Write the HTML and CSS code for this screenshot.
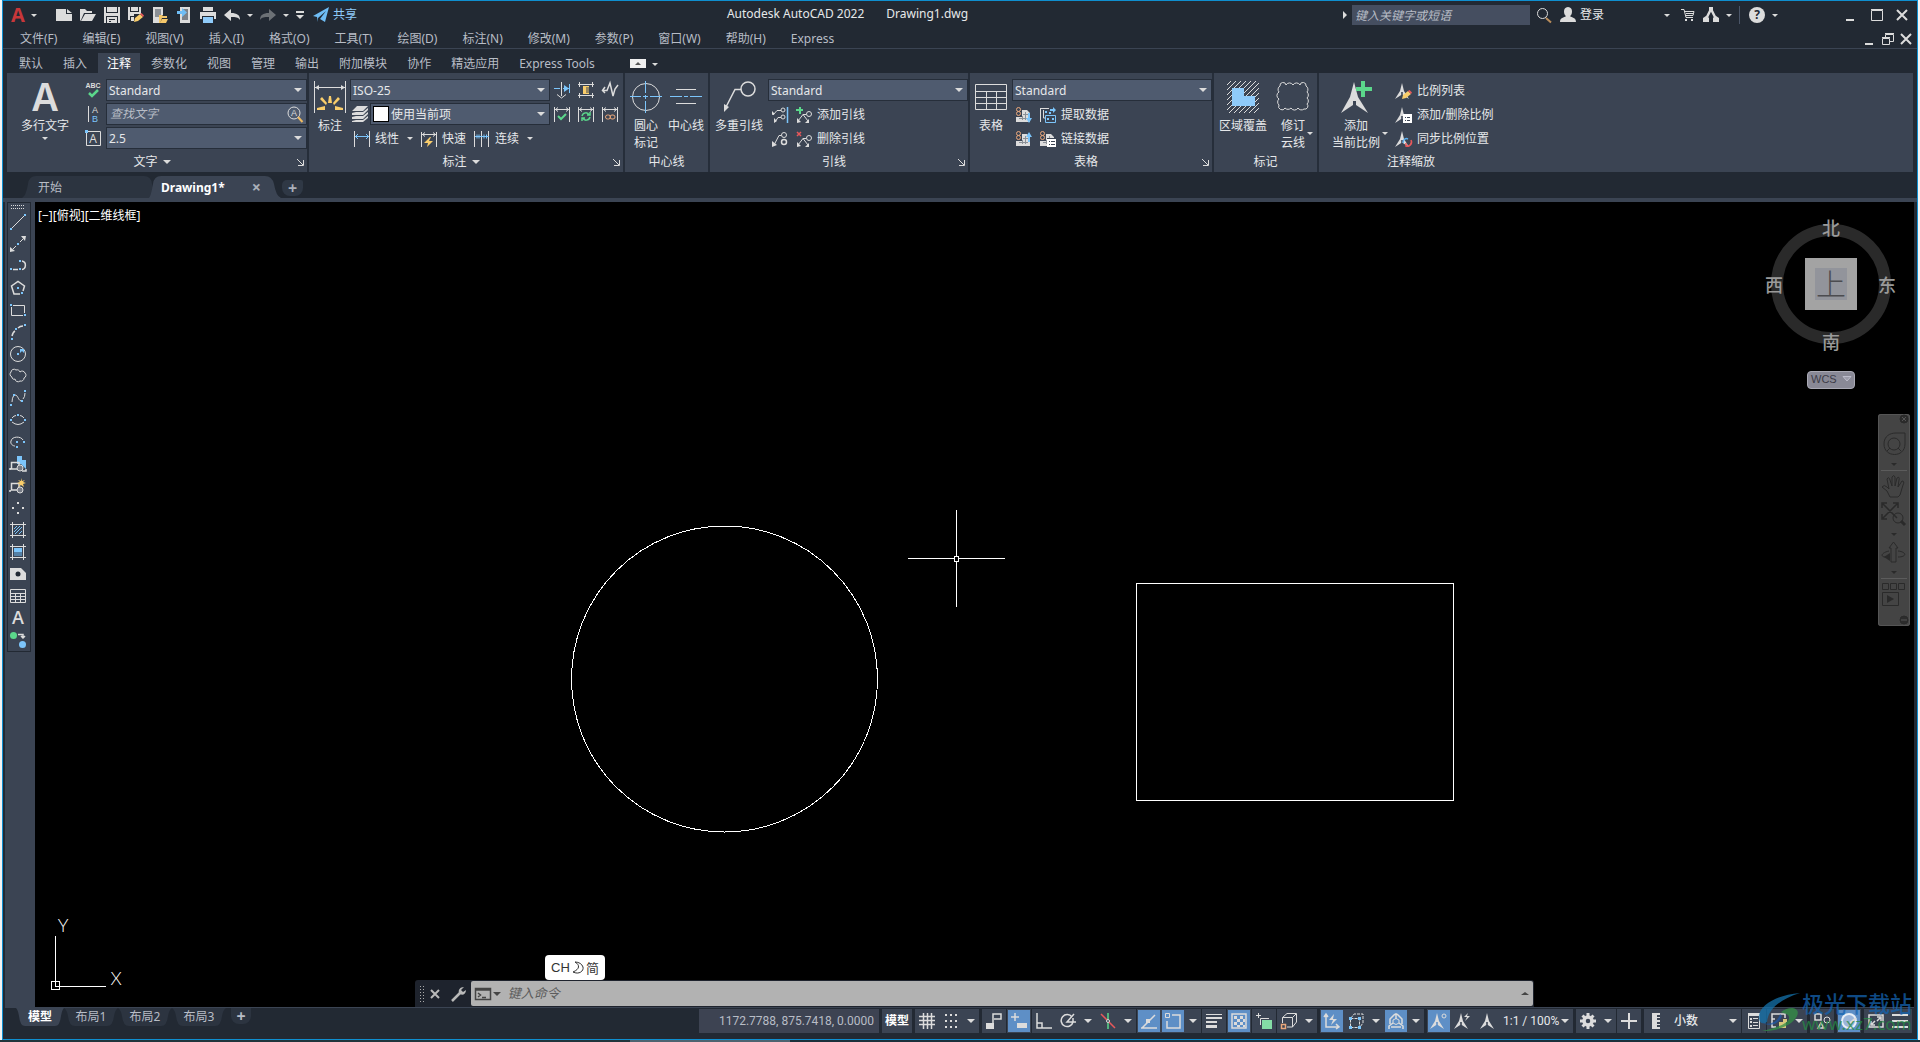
FILE: index.html
```html
<!DOCTYPE html>
<html lang="zh-CN">
<head>
<meta charset="utf-8">
<title>Autodesk AutoCAD 2022 - Drawing1.dwg</title>
<link rel="stylesheet" href="styles.css">
</head>
<body>
<svg class="defs" aria-hidden="true">
  <defs>
    <symbol id="scale" viewBox="0 0 16 16"><path class="fw" d="M8 0L10 8L15 16L8.800 12V9H7.200V12L1 16L6 8Z"/></symbol>
    <symbol id="dimbars" viewBox="0 0 16 16"><path class="w" d="M.5 1V16M15.500 1V16M1 3.500H15M4 1.500L1.500 3.500L4 5.500M12 1.500L14.500 3.500L12 5.500"/></symbol>
    <symbol id="sheet" viewBox="0 0 16 16"><path class="fw" d="M0 10H6V3H11L14 6V15H0Z"/><path d="M7 7.500H12M3 11.500H12M9.500 5V13M6.500 9V13" stroke="#8b9096"/><rect class="o" x=".5" y=".5" width="4" height="4" rx="2"/><rect class="o" x=".5" y="4.500" width="4" height="4" rx="2"/></symbol>
    <symbol id="table" viewBox="0 0 16 16"><path class="w" d="M.5 1.500H15.500V14.500H.5ZM0 5.500H16M0 8.500H16M0 11.500H16M5.500 5V15M10.500 5V15"/></symbol>
  </defs>
</svg>
<div class="window">
  <header class="titlebar">
    <div class="quick">
      <button class="logo" aria-label="应用程序菜单"><svg width="18" height="18"><text x="9" y="16" text-anchor="middle" class="logo-a">A</text></svg></button>
      <i class="car s"></i>
      <button class="q first" aria-label="新建"><svg><path class="fw" d="M0 2H10V7H16V14H0ZM11 2L16 6H11Z"/></svg></button>
      <button class="q" aria-label="打开"><svg><path class="fw" d="M0 2H5L7 4H12V6H4L1 13L0 14ZM5 7H16L12 14H1Z"/></svg></button>
      <button class="q" aria-label="保存"><svg><path class="fw" d="M0 0H2V6H14V0H16V16H14V9H2V16H0Z"/><path class="fw" d="M3 0H13V5H3ZM3 10H13V16H3Z"/><path d="M5 12.500H11M5 14.500H7" stroke="#222933"/></svg></button>
      <button class="q" aria-label="另存为"><svg><path class="fw" d="M0 0H2V5H11V0H13V7H6V9H2V13H0ZM3 0H10V4H3ZM3 10H6V14H3Z"/><path d="M6 15L7 11L12 7L15 10L10 14Z" fill="#f9cd6b"/><path d="M12 7L13.500 6L16 8.500L15 10Z" fill="#e8585b"/></svg></button>
      <button class="q" aria-label="从移动设备打开"><svg><path class="fw" d="M1 0H11V8H7V16H1Z"/><path d="M3 2H9V10H3Z" fill="#8b9096"/><path d="M7 8H10L11 9H15V11H10L8 16H7ZM10 12H16L14 16H8Z" fill="#f5c76a"/></svg></button>
      <button class="q" aria-label="保存到移动设备"><svg><path class="fw" d="M4 0H14V16H4Z"/><path d="M6 2H12V13H6Z" fill="#7b8088"/><path d="M1 4H6V1L11 5.500L6 10V7H1Z" fill="#6fbdf5"/></svg></button>
      <button class="q" aria-label="打印"><svg><path class="fw" d="M3 0H13V4H3ZM0 5H16V12H14V9H2V12H0Z"/><path d="M3 10H13V16H3Z" fill="#8fcbfa"/></svg></button>
      <button class="q" aria-label="放弃"><svg><path class="fw" d="M7 2V6C13 6 16 8 16 13C14 10 12 10 7 10V14L0 8Z"/></svg></button>
      <i class="car s"></i>
      <button class="q dim" aria-label="重做"><svg><path class="fw" d="M9 2V6C3 6 0 8 0 13C2 10 4 10 9 10V14L16 8Z"/></svg></button>
      <i class="car s"></i>
      <button class="q custom" aria-label="自定义"><svg viewBox="4 0 8 16"><path class="fw" d="M4 4H12V6H4ZM4 8H12L8 12Z"/></svg></button>
      <button class="share"><svg><path d="M0 9L16 0L12 15L7 12L13 4L5 11V15L4 10Z" fill="#6fbdf5"/></svg>共享</button>
    </div>
    <div class="caption"><span>Autodesk AutoCAD 2022</span><span>Drawing1.dwg</span></div>
    <div class="account">
      <i class="car side"></i>
      <input class="search" aria-label="搜索" placeholder="键入关键字或短语">
      <button class="q" aria-label="查找"><svg><circle class="w" cx="6.500" cy="6.500" r="5"/><path d="M10 11L15 15.500" stroke="#b98d5c" stroke-width="2"/></svg></button>
      <button class="login"><svg><path class="fw" d="M8 0C14 0 12 9 10 9C12 11 16 10 16 15H0C0 10 4 11 6 9C4 9 2 0 8 0Z"/></svg>登录</button>
      <i class="car s"></i>
      <button class="q cart" aria-label="商店"><svg><path class="w" d="M0 2.500H3L5 10.500H12M4 4.500H13L12 8.500H5M5 6.500H12"/><path class="fw" d="M4 12H6V14H4ZM10 12H12V14H10Z"/></svg></button>
      <button class="q" aria-label="Autodesk App Store"><svg><path class="w" stroke-width="2.500" d="M8 2L3 12M8 2L13 12M3 12H6M10 12H13"/><path class="fw" d="M6 0H10V4H6ZM0 11L3 9L6 11V15H0ZM10 11L13 9L16 11V15H10Z"/></svg></button>
      <i class="car s"></i>
      <span class="rule"></span>
      <button class="help" aria-label="帮助">?</button>
      <i class="car s"></i>
      <div class="winbtns">
        <button aria-label="最小化"><svg><path class="fw" d="M0 12H8V14H0Z"/></svg></button>
        <button aria-label="最大化"><svg><path class="w" d="M.5 3.500H11.500V13.500H.5ZM0 2.500H12"/></svg></button>
        <button aria-label="关闭"><svg><path class="w" stroke-width="2" d="M1 3L11 13M11 3L1 13"/></svg></button>
      </div>
    </div>
  </header>
  <nav class="menubar">
    <a href="#">文件(F)</a><a href="#">编辑(E)</a><a href="#">视图(V)</a><a href="#">插入(I)</a><a href="#">格式(O)</a><a href="#">工具(T)</a><a href="#">绘图(D)</a><a href="#">标注(N)</a><a href="#">修改(M)</a><a href="#">参数(P)</a><a href="#">窗口(W)</a><a href="#">帮助(H)</a><a href="#">Express</a>
    <div class="docbtns">
      <button aria-label="最小化图形"><svg><path class="fw" d="M1 12H9V14H1Z"/></svg></button>
      <button aria-label="还原图形"><svg><path class="w" d="M3.500 6V3.500H11.500V10.500H8M3 2.500H12M.5 7.500H7.500V13.500H.5ZM0 6.500H8"/></svg></button>
      <button aria-label="关闭图形"><svg><path class="w" stroke-width="2" d="M1 3L11 13M11 3L1 13"/></svg></button>
    </div>
  </nav>
  <nav class="tabs">
    <a href="#">默认</a><a href="#">插入</a><a href="#" class="on">注释</a><a href="#">参数化</a><a href="#">视图</a><a href="#">管理</a><a href="#">输出</a><a href="#">附加模块</a><a href="#">协作</a><a href="#">精选应用</a><a href="#">Express Tools</a>
    <button class="collapse" aria-label="最小化功能区"><i class="car up"></i></button><i class="car s"></i>
  </nav>

  <section class="ribbon">
    <div class="panel p-text">
      <div class="body">
        <button class="big"><svg viewBox="0 0 32 32"><text x="16" y="30" text-anchor="middle" class="mtext-a">A</text></svg>多行文字<i class="car s"></i></button>
        <div class="icons">
          <button aria-label="拼写检查"><svg><text x="8" y="6" text-anchor="middle" class="abc">ABC</text><path d="M4 11L7 14L13 8" class="g" stroke-width="2.500"/></svg></button>
          <button aria-label="文字对齐"><svg><path class="w" d="M3.500 0V16"/><text x="10" y="7" text-anchor="middle" class="ab">A</text><text x="10" y="16" text-anchor="middle" class="ab bl">B</text></svg></button>
          <button aria-label="文字样式"><svg><path class="w" d="M1.500 1.500H15.500V15.500H1.500Z"/><path class="fb" d="M0 0H3V3H0Z"/><text x="8" y="13" text-anchor="middle" class="boxa">A</text></svg></button>
        </div>
        <div class="col">
          <div class="combo"><select aria-label="文字样式"><option>Standard</option></select></div>
          <div class="find"><input aria-label="查找文字" placeholder="查找文字"><svg><circle class="w" cx="7" cy="7" r="6"/><text x="7" y="10" text-anchor="middle" class="ab">A</text><path d="M11 11L15.500 16" stroke="#f0bb62" stroke-width="2"/></svg></div>
          <div class="combo"><select aria-label="文字高度"><option>2.5</option></select></div>
        </div>
      </div>
      <div class="ptitle more">文字<i class="car"></i><button class="launch" aria-label="文字设置"><svg><path class="w" d="M2 2L8 8M8.500 3V8.500H3"/></svg></button></div>
    </div>

    <div class="panel p-dim">
      <div class="body">
        <button class="big"><svg viewBox="0 0 32 32"><path class="w" d="M.5 0V32M31.500 0V32M1 6.500H31"/><path class="fw" d="M1 6.500L5 4V9ZM31 6.500L27 4V9Z"/><path class="fy" d="M15 15H17L18 22H14ZM6 18L8 16L13 22L12 24ZM26 18L24 16L19 22L20 24ZM3 27L11 25V29H3ZM29 27L21 25V29H29Z"/></svg>标注</button>
        <div class="col">
          <div class="combo"><select aria-label="标注样式"><option>ISO-25</option></select></div>
          <div class="row layer"><svg><path class="fw" d="M5 0H16L11 5H0ZM0 7L4 6H11L16 2V4L11 9H0ZM0 11L4 10H11L16 6V8L11 13H0ZM0 15L4 14H11L16 10V12L11 16H0Z"/></svg><div class="combo"><span class="swatch"></span><select aria-label="标注图层"><option>使用当前项</option></select></div></div>
          <div class="row dims">
            <button><svg><path class="w" d="M.5 0V16M15.500 0V16"/><path class="b" d="M1 5.500H15M4 3L1.500 5.500L4 8M12 3L14.500 5.500L12 8"/></svg>线性</button><i class="car s"></i>
            <button><svg><use href="#dimbars"/><path class="fy" d="M9 6L3 12H7L6 16L12 10H8L10 6Z"/></svg>快速</button>
            <button><svg><path class="w" d="M.5 0V16M7.500 0V16M14.500 0V16"/><path class="b" d="M1 5.500H15M3 3.500V7.500M5 3.500V7.500M10 3.500V7.500M12.500 3.500V7.500"/></svg>连续</button><i class="car s"></i>
          </div>
        </div>
        <div class="iconGrid">
          <button aria-label="打断"><svg><path class="w" d="M7.500 0V14M3 12.500L7.500 16L12 12.500"/><path class="b" d="M0 6.500H6M9 6.500H15M15.500 2V11"/><path class="fb" d="M10 3L15 6.500L10 10Z"/></svg></button>
          <button aria-label="调整间距"><svg><path class="w" d="M0 2.500H16M0 13.500H16M1.500 0V5M14.500 0V5M1.500 11V16M14.500 11V16"/><path class="fy" d="M5 4H11V12H5Z"/><path d="M8 6H11M8 8H11M8 10H11" stroke="#3b4453"/></svg></button>
          <button aria-label="折弯标注"><svg><path class="w" d="M0 8.500H5L8 1L11 14L13 7L16 3M3 5L.5 8.500L3 11" stroke-width="1.500"/></svg></button>
          <button aria-label="检验"><svg><use href="#dimbars"/><path class="g" stroke-width="2" d="M4 10L7 13L12 8"/></svg></button>
          <button aria-label="更新"><svg><use href="#dimbars"/><path class="g" stroke-width="1.500" d="M4 10C5 6 10 6 11 9M12 6V9H9M12 11C11 15 6 15 5 12M4 15V12H7"/></svg></button>
          <button aria-label="重新关联"><svg><use href="#dimbars"/><rect class="o" x="3.500" y="9" width="5" height="4" rx="2"/><rect class="o" x="8" y="9" width="5" height="4" rx="2"/></svg></button>
        </div>
      </div>
      <div class="ptitle more">标注<i class="car"></i><button class="launch" aria-label="标注设置"><svg><path class="w" d="M2 2L8 8M8.500 3V8.500H3"/></svg></button></div>
    </div>

    <div class="panel p-center">
      <div class="body">
        <button class="big"><svg viewBox="0 0 32 32"><circle class="w" cx="16" cy="16" r="13.500"/><path class="b" d="M15.500 0V12M15.500 14V18M15.500 20V32M0 15.500H11M13 15.500H18M20 15.500H32"/></svg>圆心<br>标记</button>
        <button class="big"><svg viewBox="0 0 32 32"><path class="w" d="M6 8.500H26M6 22.500H26"/><path class="b" d="M0 15.500H12M14 15.500H18M20 15.500H32"/></svg>中心线</button>
      </div>
      <div class="ptitle">中心线</div>
    </div>

    <div class="panel p-leader">
      <div class="body">
        <button class="big"><svg viewBox="0 0 32 32"><circle class="w" cx="25" cy="8" r="7" stroke-width="1.500"/><path class="w" stroke-width="1.500" d="M18 8.500H12L3 26"/><path class="fw" d="M1 31V23L6 26Z"/></svg>多重引线</button>
        <div class="col">
          <div class="combo"><select aria-label="多重引线样式"><option>Standard</option></select></div>
          <div class="row links"><button aria-label="对齐"><svg><path class="b" stroke-width="1.500" d="M15.500 0V16"/><circle class="w" cx="11" cy="3" r="2"/><circle class="w" cx="11" cy="10" r="2"/><path class="w" d="M9 3.500H5L1 8M9 10.500H6L3 15"/><path class="fw" d="M0 8V4L3 7ZM2 16V11L5 14Z"/></svg></button><button class="txt"><svg><path d="M3 0H5V2H7V4H5V7H3V4H0V2H3Z" fill="#5bd78b"/><circle class="w" cx="13" cy="7" r="2.500"/><path class="w" d="M10 7.500H7L2 14M7 7.500L12 14"/><path class="fw" d="M1 16V11L5 15ZM13 16H9L13 12Z"/></svg>添加引线</button></div>
          <div class="row links"><button aria-label="合并"><svg><circle class="w" cx="12" cy="4" r="2.500"/><circle class="w" cx="12" cy="11" r="2.500" stroke-width="1.500"/><path class="w" d="M9 4.500H7L2 14"/><path class="fw" d="M0 16V10L5 14Z"/></svg></button><button class="txt"><svg><path d="M1 1L5 5M5 1L1 5" stroke="#e8585b" stroke-width="1.500"/><circle class="w" cx="13" cy="7" r="2.500"/><path class="w" d="M10 7.500H7L2 14M7 7.500L12 14"/><path class="fw" d="M1 16V11L5 15ZM13 16H9L13 12Z"/></svg>删除引线</button></div>
        </div>
      </div>
      <div class="ptitle more">引线<button class="launch" aria-label="引线设置"><svg><path class="w" d="M2 2L8 8M8.500 3V8.500H3"/></svg></button></div>
    </div>

    <div class="panel p-table">
      <div class="body">
        <button class="big"><svg viewBox="0 0 32 32"><path class="w" d="M.5 3.500H31.500V28.500H.5ZM1 10.500H31M1 16.500H31M1 22.500H31M11.500 11V28M21.500 11V28"/></svg>表格</button>
        <div class="col">
          <div class="combo"><select aria-label="表格样式"><option>Standard</option></select></div>
          <div class="row links"><button aria-label="从源下载"><svg><use href="#sheet"/><path class="fb" d="M12 6H14V11H16L13 16L10 11H12Z"/></svg></button><button class="txt"><svg><path class="w" d="M.5 1V15M1 1.500H9M3.500 3V11H6"/><path class="b" d="M5.500 8.500H15.500V15.500H5.500Z"/><path class="fb" d="M10 2H13V0L16 3L13 6V4H10ZM5 4H7V6H5ZM9 5H11V7H9ZM7 11H9V13H7ZM12 11H14V13H12Z"/></svg>提取数据</button></div>
          <div class="row links"><button aria-label="上载到源"><svg><use href="#sheet"/><path class="fb" d="M12 11H14V6H16L13 1L10 6H12Z"/></svg></button><button class="txt"><svg><use href="#sheet"/><path d="M7 7H16V16H7Z" fill="#fff"/><path d="M7 7.500H16M9 10.500H10M11 10.500H15M9 13.500H10M11 13.500H15" stroke="#3b4453"/></svg>链接数据</button></div>
        </div>
      </div>
      <div class="ptitle more">表格<button class="launch" aria-label="表格设置"><svg><path class="w" d="M2 2L8 8M8.500 3V8.500H3"/></svg></button></div>
    </div>

    <div class="panel p-mark">
      <div class="body">
        <button class="big"><svg viewBox="0 0 32 32"><path class="w" d="M0 4L4 0M0 9L9 0M0 14L14 0M0 19L19 0M0 24L24 0M0 29L29 0M2 32L32 2M7 32L32 7M12 32L32 12M17 32L32 17M22 32L32 22M27 32L32 27"/><path d="M5 7H17V15H28V25H5Z" fill="#8fcbfa"/></svg>区域覆盖</button>
        <button class="big"><svg viewBox="0 0 32 32"><path class="w" d="M3 5A3 3 0 0 1 9 4A4 4 0 0 1 16 4A4 4 0 0 1 23 4A3 3 0 0 1 29 5A4 4 0 0 1 30 11A4 4 0 0 1 30 17A4 4 0 0 1 30 23A3 3 0 0 1 27 28A4 4 0 0 1 21 27A4 4 0 0 1 14 27A4 4 0 0 1 8 27A3 3 0 0 1 2 24A4 4 0 0 1 2 18A4 4 0 0 1 2 11A4 4 0 0 1 3 5Z"/></svg>修订<br>云线</button><i class="car s low"></i>
      </div>
      <div class="ptitle">标记</div>
    </div>

    <div class="panel p-anno">
      <div class="body">
        <button class="big"><svg viewBox="0 0 32 32"><path class="fw" d="M14 1L18 16L28 32L16 24V20H13V24L1 32L10 16Z"/><path d="M21 0H25V6H32V10H25V16H21V10H16V6H21Z" fill="#5bd78b"/></svg>添加<br>当前比例</button><i class="car s low"></i>
        <div class="col">
          <button class="txt"><svg><use href="#scale" x="-2"/><path d="M6 16L7 12L12 8L15 11L10 15Z" fill="#f9cd6b"/><path d="M12 8L13.500 7L16 9.500L15 11Z" fill="#e8585b"/></svg>比例列表</button>
          <button class="txt"><svg><use href="#scale" x="-2"/><path d="M7 7H16V16H7Z" fill="#fff"/><path d="M9 10.500H10M11 10.500H14M9 13.500H10M11 13.500H14" stroke="#3b4453"/></svg>添加/删除比例</button>
          <button class="txt"><svg><use href="#scale" x="-2"/><path stroke="#5bb0f0" stroke-width="1.500" d="M7 12C7 8 10 7 12 8"/><path stroke="#e8585b" stroke-width="1.500" d="M15 9C17 13 13 16 10 15M10 12V15H13"/></svg>同步比例位置</button>
        </div>
      </div>
      <div class="ptitle">注释缩放</div>
    </div>
  </section>

  <nav class="doctabs">
    <a href="#" class="start">开始</a><a href="#" class="active">Drawing1*<span>×</span></a><button aria-label="新图形">+</button>
  </nav>

  <main class="work">
    <aside class="tools">
      <div class="toolbox">
        <span class="grip"></span>
        <button aria-label="直线"><svg><path class="w" d="M1 15L15 1"/><path class="fb" d="M0 14H2V16H0ZM14 0H16V2H14Z"/></svg></button>
        <button aria-label="构造线"><svg><path class="w" d="M3 13L6 10M10 6L13 3"/><path class="fw" d="M0 16V11L5 15ZM16 0H11L15 5Z"/><path class="fb" d="M7 7H9V9H7Z"/></svg></button>
        <button aria-label="多段线"><svg><path class="w" stroke-width="1.500" d="M3 11.500H8M12 3C17 4 16 11 12 11.500"/><path class="fb" d="M0 10H2V12H0ZM9 2H11V4H9ZM9 10H11V12H9Z"/></svg></button>
        <button aria-label="多边形"><svg><path class="w" stroke-width="1.500" d="M10 14H4L1.500 6L8 1.500L14.500 6L13 11"/><path class="fb" d="M7 7H9V9H7ZM11 12H13V14H11Z"/></svg></button>
        <button aria-label="矩形"><svg><path class="w" d="M3 3.500H14.500V11M13 13.500H1.500V5"/><path class="fb" d="M0 2H2V4H0ZM14 12H16V14H14Z"/></svg></button>
        <button aria-label="圆弧"><svg><path class="w" stroke-width="1.500" d="M2 12Q3 8 5 7M8 4Q10 2 13 2"/><path class="fb" d="M1 14H3V16H1ZM5 4H7V6H5ZM14 0H16V2H14Z"/></svg></button>
        <button aria-label="圆"><svg><circle class="w" cx="8" cy="8" r="7.500"/><path class="fb" d="M7 7H9V9H7ZM10 3H14V7L12 5L10 7V5Z"/></svg></button>
        <button aria-label="修订云线"><svg><path class="w" d="M2 9A3 3 0 0 1 1 4A3 3 0 0 1 6 2A3 3 0 0 1 10 4A3 3 0 0 1 15 5A3 3 0 0 1 14 10A3 3 0 0 1 10 13A3 3 0 0 1 5 11A2 2 0 0 1 2 9Z"/></svg></button>
        <button aria-label="样条曲线"><svg><path class="w" d="M2 12Q2 8 4 5M5 5C8 5 8 10 11 11M13 9Q15 7 15 3"/><path class="fb" d="M0 14H2V16H0ZM3 4H5V6H3ZM11 10H13V12H11ZM14 0H16V2H14Z"/></svg></button>
        <button aria-label="椭圆"><svg><path class="w" d="M2 6Q4 3.500 6 3.500M10 3.500Q12 3.500 14 6M2 10Q8 15 14 10"/><path class="fb" d="M0 7H2V9H0ZM7 2H9V4H7ZM14 7H16V9H14Z"/></svg></button>
        <button aria-label="椭圆弧"><svg><path class="w" d="M13 6C11 2 2 2 1 7C0 10 3 12 5 12"/><path class="fb" d="M6 7H8V9H6ZM13 7H15V9H13ZM6 12H8V14H6Z"/></svg></button>
        <button aria-label="插入块"><svg><path class="fb" d="M7 0H12V4H16V13L11 8H7Z"/><path class="w" stroke-width="1.500" d="M1.500 6.500H9V13H1.500ZM0 14V12M12 15H16V13"/><circle class="w" cx="10" cy="12" r="3" fill="#777c86"/></svg></button>
        <button aria-label="创建块"><svg><path class="w" stroke-width="1.500" d="M1.500 5.500H9V12H1.500ZM0 14V12"/><circle class="w" cx="10" cy="12" r="3" fill="#777c86"/><path class="fy" d="M11 0L12 3L15 2L13 4L16 5L13 6L14 9L11 7L8 9L10 6L7 5L10 4L8 2L11 3Z"/></svg></button>
        <button aria-label="点"><svg><path class="fw" d="M7 2H9V4H7ZM2 7H4V9H2ZM12 7H14V9H12ZM7 12H9V14H7Z"/></svg></button>
        <button aria-label="图案填充"><svg><path class="w" d="M0 2.500H16M0 13.500H16M2.500 0V16M13.500 0V16"/><path class="b" d="M4 7L7 4M4 10L10 4M5 12L12 5M9 12L12 9"/></svg></button>
        <button aria-label="渐变色"><svg><path class="w" d="M0 2.500H16M0 13.500H16M2.500 0V16M13.500 0V16"/><rect x="4" y="4" width="8" height="4" fill="#7cc5fb"/><rect x="4" y="8" width="8" height="4" fill="#5580a5"/></svg></button>
        <button aria-label="面域"><svg><path class="fw" d="M0 2H11L16 7V14H0Z"/><circle cx="8" cy="8" r="2.500" fill="#222933"/></svg></button>
        <button aria-label="表格"><svg><use href="#table"/></svg></button>
        <button aria-label="多行文字"><svg><text x="8" y="14" text-anchor="middle" class="tool-a">A</text></svg></button>
        <button aria-label="添加选定对象"><svg><circle cx="3.500" cy="3.500" r="3.500" fill="#5bd78b"/><circle cx="12.500" cy="12.500" r="3.500" fill="#7cc5fb"/><path class="w" stroke-width="1.500" d="M8 2.500H13V5M11 4L13 6L15 4"/></svg></button>
      </div>
    </aside>
    <section class="canvas" aria-label="绘图区">
      <div class="viewlabel">[−][俯视][二维线框]</div>
      <svg class="drawing">
        <circle cx="689.500" cy="477" r="153" shape-rendering="crispEdges"/>
        <path shape-rendering="crispEdges" d="M1101.500 381.500H1418.500V598.500H1101.500ZM873 356.500H919M924 356.500H970M921.500 308V354M921.500 359V405M919.500 354.500H923.500V359.500H919.500Z"/>
      </svg>
      <svg class="ucs" viewBox="0 0 100 80"><path shape-rendering="crispEdges" d="M4.500 66.500H12.500V74.500H4.500ZM8.500 21V71M8 71.500H59"/><text x="16" y="17" text-anchor="middle">Y</text><text x="69" y="70" text-anchor="middle">X</text></svg>
      <div class="viewcube">
        <span class="n">北</span><span class="w-">西</span><button>上</button><span class="e">东</span><span class="s-">南</span>
      </div>
      <button class="wcs">WCS<svg viewBox="0 0 8 6"><path d="M0 .5H8L4 5Z" fill="#9c9caa" stroke="#bcbcca"/></svg></button>
      <div class="navbar">
        <svg viewBox="0 0 32 212"><circle cx="26" cy="5" r="4" fill="#2c2c2c"/><path d="M24 3L28 7M28 3L24 7" stroke="#555"/>
        <path d="M6 30C6 22 12 19 18 19H27V30C27 44 6 44 6 30Z"/><circle cx="16" cy="30" r="6"/><path d="M9 37L12 34M23 37L20 34"/>
        <path class="k" d="M13 49H19L16 52Z"/><path d="M3 56.500H29" stroke="#5c5c5c"/>
        <path d="M12 83L9 77L4 73Q6 70 9 73L11 75L9 65Q11 62 12 66L14 72V63Q16 60 17 63V72L19 64Q22 62 21 66L20 73L24 67Q27 67 25 71L22 81L20 83Z"/>
        <path d="M5 90L19 104M19 90L5 104M4 94V89H9M15 89H20V94M4 100V105H9" stroke-width="1.500"/><circle cx="20" cy="104" r="5"/><path d="M23 107L27 111" stroke-width="3"/>
        <path class="k" d="M13 119H19L16 122Z"/>
        <path d="M13 148V134H11L15.500 128L20 134H18V148Z"/><path d="M11 137C2 139 2 144 10 143M20 137C29 138 29 143 20 143"/><path class="k" d="M6 143L12 139V147Z"/>
        <path class="k" d="M13 157H19L16 160Z"/><path d="M3 164.500H29" stroke="#5c5c5c"/>
        <path d="M4.500 169.500H10.500V175.500H4.500ZM12.500 169.500H18.500V175.500H12.500ZM20.500 169.500H26.500V175.500H20.500ZM4.500 178.500H20.500V191.500H4.500Z"/><path class="k" d="M9 181L16 185L9 189Z"/>
        <circle cx="26" cy="206" r="4" fill="#2c2c2c"/><path d="M23 206H29" stroke="#555"/></svg>
      </div>
      <div class="cmd">
        <span class="dots"></span>
        <button class="x" aria-label="关闭"><svg viewBox="0 0 12 12"><path d="M2 2L10 10M10 2L2 10" stroke="#b9b9b9" stroke-width="2"/></svg></button>
        <button aria-label="自定义"><svg><path d="M1 15L9 7" stroke="#b9b9b9" stroke-width="2.500"/><path d="M15 4C15 9 10 10 8 7C7 4 9 1 13 1L10 4L12 6Z" fill="#b9b9b9"/></svg></button>
        <label class="entry"><svg><path d="M.5 2.500H15.500V13.500H.5ZM0 4H16M3 7L5.500 9L3 11M7 11.500H11" stroke="#444" stroke-width="1.500"/></svg><i class="car dk"></i><input aria-label="命令" placeholder="键入命令"><i class="car up dk"></i></label>
      </div>
      <div class="ime">CH<svg><path d="M5 2C10 5 10 9 3 12C9 15 14 11 13 7C12 4 9 2 5 2Z" stroke="#333"/></svg>简</div>
    </section>
  </main>

  <footer class="status">
    <nav class="layouts"><a href="#" class="on">模型</a><a href="#">布局1</a><a href="#">布局2</a><a href="#">布局3</a><button aria-label="新建布局">+</button></nav>
    <div class="sbar">
      <div class="coords">1172.7788, 875.7418, 0.0000</div>
      <button class="model brk">模型</button>
      <div class="sg brk"><button aria-label="栅格"><svg><path class="w" stroke-width="1.500" d="M4.500 0V16M8.500 0V16M12.500 0V16M0 3.500H16M0 7.500H16M0 11.500H16"/></svg></button><button aria-label="捕捉"><svg><path class="fw" d="M2 1H4V3H2ZM7 1H9V3H7ZM12 1H14V3H12ZM2 7H4V9H2ZM7 7H9V9H7ZM12 7H14V9H12ZM2 13H4V15H2ZM7 13H9V15H7ZM12 13H14V15H12Z"/></svg></button><span class="dd"><i class="car"></i></span></div>
      <div class="sg brk"><button aria-label="推断约束"><svg><path class="w" stroke-width="1.500" d="M7 10V1H15V6H8"/><path class="fw" d="M0 10H8V16H0Z"/></svg></button></div>
      <div class="sg"><button class="on" aria-label="动态输入"><svg><path class="w" stroke-width="1.500" d="M4 0V8M0 4H8"/><path class="fw" d="M6 10H16V15H6Z"/></svg></button></div>
      <div class="sg"><button aria-label="正交"><svg><path class="w" stroke-width="1.500" d="M1 0V15H16M1 10H6V15"/></svg></button><button aria-label="极轴"><svg><path class="w" stroke-width="1.500" d="M12 4A6 6 0 1 0 13 9H7L14 1M13 5V9H16"/></svg></button><span class="dd"><i class="car"></i></span><button aria-label="等轴测"><svg><path stroke="#5bd78b" stroke-width="1.500" d="M8 0V6M8 10V16"/><path stroke="#e8585b" stroke-width="1.500" d="M1 1L7 7M9 9L15 15"/><circle class="w" cx="8" cy="8" r="1.500"/></svg></button><span class="dd"><i class="car"></i></span></div>
      <div class="sg"><button class="on" aria-label="追踪"><svg><path class="w" stroke-width="1.500" d="M0 15H16M1 15L14 2"/><path class="fw" d="M5 6H9V10H5Z"/></svg></button><button class="on" aria-label="对象捕捉"><svg><path class="w" stroke-width="1.500" d="M7 2H15V15H2V8"/><path class="w" d="M.5.500H4.500V4.500H.5Z"/></svg></button><span class="dd"><i class="car"></i></span></div>
      <div class="sg"><button aria-label="线宽"><svg><path class="w" d="M0 1.500H16"/><path class="fw" d="M0 4H16V6H0ZM0 8H11V10H0ZM0 12H11V15H0Z"/></svg></button></div>
      <div class="sg"><button class="on" aria-label="透明度"><svg><path class="w" stroke-width="1.500" d="M1 1H15V15H1Z"/><path class="fw" d="M3 3H6V6H3ZM9 3H12V6H9ZM6 6H9V9H6ZM12 6H14V9H12ZM3 9H6V12H3ZM9 9H12V12H9ZM6 12H9V14H6ZM12 12H14V14H12Z"/></svg></button></div>
      <div class="sg"><button aria-label="选择循环"><svg><path class="w" d="M2.500 0V5M0 2.500H5M4.500 12V5.500H13"/><path d="M6 7H16V16H6Z" fill="#84dda5"/></svg></button></div>
      <div class="sg"><button aria-label="三维对象捕捉"><svg><path class="w" d="M1.500 10V4.500H11.500V14H6M1.500 4.500L6 .5H15.500L11.500 4.500M15.500 1V9L11.500 14"/><path class="o" stroke-width="1.500" d="M.5 11.500H4.500V15.500H.5Z"/></svg></button><span class="dd"><i class="car"></i></span></div>
      <div class="sg brk"><button class="on" aria-label="动态 UCS"><svg><path class="w" stroke-width="1.500" d="M2 2V14H15M0 4L2 1L4 4M12 11L15 14L12 16"/><path class="fw" d="M10 1L5 7H9L7 12L13 6H9Z"/></svg></button><button aria-label="选择过滤"><svg><path class="w" stroke-dasharray="3 1" d="M2.500 5.500H11.500V14.500H2.500ZM3 5L6 1H15V10L12 14"/><path class="fb" d="M1 4H4V7H1ZM10 4H13V7H10ZM1 13H4V16H1ZM10 13H13V16H10Z"/></svg></button><span class="dd"><i class="car"></i></span><button class="on" aria-label="小控件"><svg><path class="w" d="M8 0V6M5 10L1 13V16M11 10L15 13V16M7 1L2 6V11M9 1L14 6V11M3 14H13" stroke-width="1.500"/><path class="w" d="M5 7L8 5.500L11 7V10L8 11.500L5 10Z"/></svg></button><span class="dd"><i class="car"></i></span></div>
      <div class="sg brk"><button class="on" aria-label="注释可见性"><svg><use href="#scale" x="-2"/><circle class="w" cx="13" cy="3" r="2"/></svg></button><button aria-label="自动缩放"><svg><use href="#scale" x="-2"/><path class="fw" d="M13 0L9 4H12L10 8L15 3H12Z"/></svg></button><button aria-label="注释比例"><svg><use href="#scale"/></svg></button><button class="ratio">1:1 / 100%<i class="car"></i></button></div>
      <div class="sg brk"><button aria-label="切换工作空间"><svg><circle cx="8" cy="8" r="4" stroke="#dcdcdc" stroke-width="3.500"/><path class="w" stroke-width="3" d="M8 0V3M8 13V16M0 8H3M13 8H16M2.500 2.500L4.500 4.500M11.500 11.500L13.500 13.500M13.500 2.500L11.500 4.500M4.500 11.500L2.500 13.500"/></svg></button><span class="dd"><i class="car"></i></span></div>
      <div class="sg"><button aria-label="注释监视器"><svg><path class="w" stroke-width="2" d="M8 0V16M0 8H16"/></svg></button></div>
      <div class="sg brk"><button class="units"><svg><path class="fw" d="M4 0H12V2H9V4H12V5H9V7H12V9H9V11H12V12H9V14H12V16H4Z"/></svg><span>小数</span><i class="car"></i></button></div>
      <div class="sg"><button aria-label="快捷特性"><svg><path class="w" d="M2.500.500H13.500V15.500H2.500Z"/><path class="fw" d="M2 0H14V3H2ZM4 5H6V7H4ZM4 8H6V10H4ZM4 12H6V14H4ZM7 5H12V6H7ZM7 9H12V10H7ZM7 12H12V13H7Z"/></svg></button></div>
      <div class="sg"><button aria-label="锁定用户界面"><svg><path class="w" stroke-width="1.500" d="M5 14H1V1H14V5M1 6H4"/><path d="M8 9H15V15H8ZM12 9V6H16V9" fill="#d7c77d"/></svg></button><span class="dd"><i class="car"></i></span></div>
      <div class="sg brk"><button aria-label="隔离对象"><svg><path class="w" stroke-width="1.500" d="M1 1H7V7H1ZM4 15L7 10L10 15Z"/><circle class="w" cx="13" cy="7" r="3"/></svg></button></div>
      <div class="sg brk"><button class="on" aria-label="硬件加速"><svg><circle cx="8" cy="8" r="7" fill="#9bb6da" stroke="#e8eef5" stroke-width="2"/><path class="w" stroke-width="2" d="M9 10L15 5"/></svg></button></div>
      <div class="sg brk"><button aria-label="全屏显示"><svg><path class="w" stroke-width="1.500" d="M1 2H15V14H1ZM4 11L7 8M9 8L12 5M3 8V12H7M9 4H13V8"/></svg></button><button aria-label="自定义"><svg><path class="fw" d="M0 1H16V3H0ZM0 7H16V9H0ZM0 13H16V15H0Z"/></svg></button></div>
    </div>
  </footer>
  <div class="watermark"><svg viewBox="0 0 44 38"><path d="M42 0C18 2 3 12 1 22C0 30 5 32 9 29C10 17 20 7 42 0Z" fill="#1573ad"/><path d="M23 19C32 12 43 15 39 23C34 33 19 38 4 38C23 34 32 29 31 24C30 20 26 21 23 19Z" fill="#349145"/><path d="M2 27C6 33 19 32 22 21L24 23C20 34 6 34 2 27Z" fill="#1e58a8"/></svg><div><strong>极光下载站</strong><span>www.xz7.com</span></div></div>
</div>
<div class="underbar"></div>
</body>
</html>
```
FILE: styles.css
```css
* { box-sizing: border-box; }
body {
  margin: 0;
  min-height: 100vh;
  display: flex;
  flex-direction: column;
  background: #f4f4f4;
  color: #e6e8ea;
  font: 12px/16px "Noto Sans", "Noto Sans CJK SC", sans-serif;
  overflow: hidden;
}
button, input, select { font: inherit; color: inherit; border: 0; padding: 0; margin: 0; background: none; border-radius: 0; }
a { color: inherit; text-decoration: none; }
svg { width: 16px; height: 16px; fill: none; flex: none; display: block; overflow: visible; }
.defs { position: absolute; width: 0; height: 0; }
.w { stroke: #dcdcdc; }
.b { stroke: #7cc5fb; }
.g { stroke: #5bd78b; }
.o { stroke: #e9a77b; }
.fw { fill: #dcdcdc; }
.fb { fill: #7cc5fb; }
.fy { fill: #f9cd6b; }

.car { flex: none; width: 8px; height: 4px; border: 4px solid transparent; border-top-color: #dcdcdc; border-bottom: 0; }
.car.s { width: 6px; height: 3px; border-width: 3px 3px 0; }
.car.up { border: 3px solid transparent; border-bottom-color: #555; border-top: 0; height: 3px; width: 6px; }
.car.side { border: 4px solid transparent; border-left-color: #dcdcdc; border-right: 0; height: 8px; width: 4px; }
.car.dk { border-top-color: #444; }
.car.up.dk { border-top: 0; border-bottom-color: #444; border-left-width: 4px; border-right-width: 4px; width: 8px; }

.window {
  position: relative;
  flex: 1;
  display: flex;
  flex-direction: column;
  margin: 0 2px;
  border: 1px solid #0f8fd0;
  background: #222933;
}
.underbar { height: 2px; background: linear-gradient(90deg, #21353c 0 630px, #4d6370 630px 790px, #1c303b 790px); }

/* title bar */
.titlebar { display: grid; grid-template-columns: 38% auto 1fr; height: 28px; align-items: center; padding-right: 9px; }
.quick, .account { display: flex; align-items: center; }
.quick { padding-left: 6px; }
.logo svg { width: 18px; height: 18px; }
.logo-a { font: 700 20px "Open Sans", sans-serif; fill: #c8373a; stroke: none; }
.logo + .car { margin: 0 18px 0 4px; }
.q { margin-right: 8px; }
.q + .car { margin-right: 7px; margin-left: -1px; }
.quick .car + .q { margin-left: 1px; }
.quick .q + .car { margin-right: 6px; }
.dim { opacity: .4; }
.quick .custom { margin-right: 9px; }
.custom svg { width: 8px; }
.share { display: flex; align-items: center; gap: 4px; color: #8fcbfa; }
.caption { display: flex; gap: 22px; line-height: 24px; padding-bottom: 2px; }
.account { justify-content: flex-end; }
.search { width: 178px; height: 20px; margin: 0 6px 0 5px; padding: 0 3px; background: #454e60; }
input::placeholder { color: #b8bdc6; font-style: italic; opacity: 1; }
.login { display: flex; align-items: center; gap: 4px; margin-right: 60px; }
.account > .cart { margin-left: 11px; }
.cart svg { width: 14px; }
.rule { width: 1px; height: 18px; background: #4a5568; margin-right: 9px; }
.help { width: 16px; height: 16px; border-radius: 50%; background: #dcdcdc; color: #222933; font-weight: 700; line-height: 16px; }
.help + .car { margin-left: 7px; }
.winbtns, .docbtns { display: flex; gap: 13px; }
.winbtns { margin-left: 68px; }
.winbtns svg, .docbtns svg { width: 12px; }
.docbtns { margin-left: auto; gap: 6px; }

/* menus */
.menubar { display: flex; align-items: center; height: 20px; padding: 0 5px 0 5px; border-bottom: 1px solid #3b4453; color: #b8bdc6; }
.menubar a { padding: 0 13px 0 12px; }
.tabs { display: flex; align-items: flex-end; gap: 2px; height: 24px; padding-left: 7px; color: #b8bdc6; }
.tabs a { padding: 2px 9px 0; line-height: 18px; }
.tabs .on { background: #3b4453; color: #fff; }
.collapse { width: 16px; height: 9px; background: #efefef; display: grid; place-items: center; margin: 0 4px 5px 24px; }
.tabs > .car { margin-bottom: 7px; }

/* ribbon */
.ribbon { display: flex; margin: 0 4px; background: #3b4453; }
.panel { flex: none; display: flex; flex-direction: column; height: 99px; border-right: 2px solid #262e3a; }
.body { display: flex; height: 78px; padding-top: 6px; align-items: flex-start; }
.ptitle { position: relative; display: flex; align-items: center; justify-content: center; gap: 5px; height: 21px; padding-top: 1px; }
.more { padding-right: 10px; }
.launch { position: absolute; right: 2px; top: 6px; }
.launch svg { width: 10px; height: 10px; }
.big { display: flex; flex-direction: column; align-items: center; line-height: 17px; padding-top: 2px; flex: none; }
.big svg { width: 32px; height: 32px; margin-bottom: 4px; }
.big .car { margin-top: 3px; }
.col { width: 200px; display: grid; grid-template-rows: repeat(3, 22px); gap: 2px; align-content: start; }
.icons { display: grid; grid-template-rows: repeat(3, 22px); gap: 2px; align-items: center; margin: 0 5px 0 9px; }
.combo, .find { position: relative; display: flex; align-items: center; height: 22px; width: 100%; background: #4f5b6f; border: 1px solid #262e3a; }
.combo select { appearance: none; flex: 1; height: 100%; padding: 1px 2px 0; width: 100%; }
.combo::after { content: ""; position: absolute; right: 4px; top: 8px; border: 4px solid transparent; border-top-color: #dcdcdc; border-bottom: 0; pointer-events: none; }
.find input { flex: 1; min-width: 0; padding: 0 3px; }
.find svg { margin-right: 3px; }
.swatch { flex: none; width: 16px; height: 16px; margin-left: 2px; background: #fff; border: 1px solid #000; }
.row { display: flex; align-items: center; padding-top: 1px; }
.row button, .txt { display: flex; align-items: center; gap: 5px; }
.txt { padding-top: 1px; }
.row .txt { padding-top: 0; }
.layer { gap: 2px; padding: 0 0 0 2px; }
.dims { padding-left: 4px; }
.dims .car { margin: 0 8px; }
.dims button + button { margin-left: 8px; }
.links { gap: 8px; padding-left: 4px; }
.iconGrid { display: grid; grid-template-columns: repeat(3, 16px); grid-template-rows: repeat(2, 22px); gap: 2px 8px; align-items: center; margin-left: 4px; }
.low { margin-top: 53px; }
.mtext-a { font: 600 38px Inter, sans-serif; fill: #dcdcdc; }
.abc { font: 700 7px "Liberation Sans", sans-serif; fill: #dcdcdc; }
.ab { font: 9px "Liberation Sans", sans-serif; fill: #dcdcdc; }
.bl { fill: #7cc5fb; }
.boxa { font: 12px "Open Sans", sans-serif; fill: #dcdcdc; }
.tool-a { font: 600 18px "Open Sans", sans-serif; fill: #dcdcdc; }
.p-text { width: 302px; }
.p-text .body { padding-left: 7px; }
.p-text .big { width: 62px; }
.p-dim { width: 316px; }
.p-dim .body { padding-left: 4px; }
.p-dim .big { width: 34px; margin-right: 3px; }
.p-center { width: 85px; }
.p-center .body { padding-left: 3px; }
.p-center .big { width: 36px; margin-right: 4px; }
.p-leader { width: 260px; }
.p-leader .body { padding-left: 4px; }
.p-leader .big { width: 50px; margin-right: 4px; }
.p-table { width: 244px; }
.p-table .body { padding-left: 4px; }
.p-table .big { width: 34px; margin-right: 4px; }
.p-mark { width: 105px; }
.p-mark .body { padding-left: 4px; }
.p-mark .big { width: 50px; }
.p-mark .big + .big { width: 40px; margin-left: 5px; }
.p-mark .low { margin-left: -6px; }
.p-anno { width: 184px; border: 0; }
.p-anno .body { padding-left: 11px; }
.p-anno .big { width: 52px; }
.p-anno .col { margin-left: 8px; width: auto; }

/* drawing tabs */
.doctabs { display: flex; align-items: flex-end; height: 30px; padding-left: 19px; border-bottom: 4px solid #3b4453; line-height: 23px; }
.doctabs a { height: 22px; }
.start { width: 134px; padding-left: 16px; color: #b8bdc6; background: #2c3440; clip-path: path("M0 22Q4 20 6 8Q7 0 14 0H122Q129 0 130 8L134 22Z"); }
.active { display: flex; width: 132px; margin-left: -7px; padding-left: 12px; font-weight: 700; color: #fff; background: #3b4453; clip-path: path("M0 22Q2 20 4 8Q5 0 12 0H116Q123 0 125 8Q127 20 132 22Z"); }
.active span { margin-left: 27px; font-size: 16px; color: #aab0ba; }
.doctabs button { width: 21px; height: 16px; margin: 0 0 2px 1px; border-radius: 5px 2px 8px 8px; background: #2f3845; color: #aab0ba; font-size: 16px; font-weight: 700; line-height: 14px; }

/* work area */
.work { flex: 1; display: flex; padding: 0 3px 0 2px; }
.tools { flex: none; width: 30px; background: #3b4453; padding-left: 2px; }
.toolbox { width: 24px; border: 1px solid #222933; display: flex; flex-direction: column; align-items: center; padding: 2px 2px 0 0; }
.grip { width: 14px; height: 4px; margin-bottom: 2px; background: repeating-linear-gradient(90deg, #dcdcdc 0 1px, transparent 1px 2px); clip-path: polygon(0 0, 100% 0, 100% 25%, 0 25%, 0 75%, 100% 75%, 100% 100%, 0 100%); }
.toolbox button { height: 22px; display: grid; place-items: center; }
.canvas { position: relative; flex: 1; background: #000; overflow: hidden; }
.viewlabel { padding: 6px 3px; color: #fff; }
.drawing { position: absolute; left: 0; top: 0; width: 100%; height: 100%; stroke: #fff; pointer-events: none; }
.ucs { position: absolute; left: 12px; bottom: 12px; width: 100px; height: 80px; stroke: #fff; }
.ucs text { font: 300 18px Lato, sans-serif; fill: #fff; stroke: none; }
.viewcube { position: absolute; right: 23px; top: 22px; width: 120px; height: 120px; border: 12px solid #2a2a2a; border-radius: 50%; font-size: 18px; line-height: 20px; font-weight: 500; color: #9a9a9a; }
.viewcube span, .viewcube button { position: absolute; }
.viewcube button { left: 22px; top: 22px; width: 52px; height: 52px; border: 10px solid #a3a3a3; background: #92949b; color: #4c4c50; font-size: 30px; line-height: 30px; font-weight: 300; }
.n { left: 39px; top: -18px; }
.s- { left: 39px; top: 96px; }
.w- { left: -18px; top: 39px; }
.e { left: 95px; top: 39px; }
.wcs { position: absolute; right: 59px; top: 169px; width: 48px; height: 18px; display: flex; align-items: center; gap: 6px; padding: 0 0 2px 3px; border-radius: 4px; border: 1px solid #aaaab5; background: #898996; color: #3c3c48; font: 11px "Liberation Sans", sans-serif; }
.wcs svg { width: 8px; height: 6px; }
.navbar { position: absolute; right: 4px; top: 212px; width: 32px; height: 212px; background: #444; border-radius: 3px; box-shadow: inset 0 0 0 1px #555; }
.navbar svg { width: 32px; height: 212px; stroke: #2a2a2a; }
.navbar .k { fill: #2a2a2a; stroke: none; }
.cmd { position: absolute; left: 20%; right: 20%; bottom: 0; height: 27px; display: flex; align-items: center; background: #1e232d; border-radius: 3px 3px 0 0; padding: 1px; margin: 0 4px; }
.dots { width: 5px; height: 18px; margin: 0 5px 0 3px; background: radial-gradient(circle, #aaa 0 1px, transparent 1px) 0 0 / 3px 3px; }
.cmd .x { margin-right: 10px; }
.x svg { width: 12px; height: 12px; }
.entry { flex: 1; height: 25px; margin-left: 4px; padding: 0 4px; display: flex; align-items: center; background: #b2b2b2; border-radius: 2px; color: #333; font-size: 13px; }
.entry .car { margin-left: 2px; }
.entry input { flex: 1; min-width: 0; margin: 0 0 2px 7px; }
.entry input::placeholder { color: #5c5c5c; }
.ime { position: absolute; left: 510px; bottom: 27px; width: 60px; height: 25px; display: flex; align-items: center; justify-content: center; background: #fff; border-radius: 4px; color: #333; font: 13px "Liberation Sans", "Noto Sans CJK SC", sans-serif; }

/* status bar */
.status { display: flex; justify-content: space-between; height: 32px; margin: 0 3px 0 2px; border-top: 1px solid #3b4453; }
.layouts { display: flex; padding-left: 11px; line-height: 18px; color: #b8bdc6; }
.layouts a { width: 54px; height: 18px; text-align: center; background: #2c3440; clip-path: path("M0 0H54Q51 2 50 8Q49 18 43 18H11Q5 18 4 8Q3 2 0 0Z"); }
.layouts .on { width: 48px; color: #fff; font-weight: 700; background: #3b4453; clip-path: path("M0 0H48Q46 2 45 8Q44 18 39 18H9Q4 18 3 8Q2 2 0 0Z"); }
.layouts button { width: 20px; height: 16px; margin-left: 5px; background: #2c3440; font-size: 16px; font-weight: 700; line-height: 14px; border-radius: 0 0 8px 8px; }
.sbar { display: flex; gap: 1px; padding: 1px 2px 0 0; height: 25px; }
.brk { margin-left: 2px; }
.coords { width: 180px; padding-right: 5px; text-align: right; line-height: 24px; background: #3d4352; color: #b8bdc6; font-family: Roboto, sans-serif; }
.model { width: 30px; background: #3b4453; font-weight: 700; color: #fff; }
.sg { display: flex; background: #3b4453; }
.sg button { width: 24px; height: 24px; display: grid; place-items: center; }
.sg .on { background: #5e8fc6; border: 1px solid #3b4453; }
.dd { width: 16px; display: grid; place-items: center; }
.sg .ratio { width: 74px; display: flex; align-items: center; justify-content: space-between; padding: 0 4px; white-space: nowrap; font-family: Roboto, sans-serif; }
.sg .units { width: 97px; display: flex; align-items: center; padding: 0 4px; }
.units span { flex: 1; padding-left: 10px; font-weight: 500; text-align: left; }

.watermark { position: absolute; right: 5px; bottom: 6px; display: flex; align-items: center; opacity: .75; pointer-events: none; }
.watermark svg { width: 44px; height: 38px; }
.watermark div { display: flex; flex-direction: column; }
.watermark strong { font-size: 22px; line-height: 24px; font-weight: 500; color: #1463b0; }
.watermark span { font-size: 17px; line-height: 18px; color: #258a44; }
```
